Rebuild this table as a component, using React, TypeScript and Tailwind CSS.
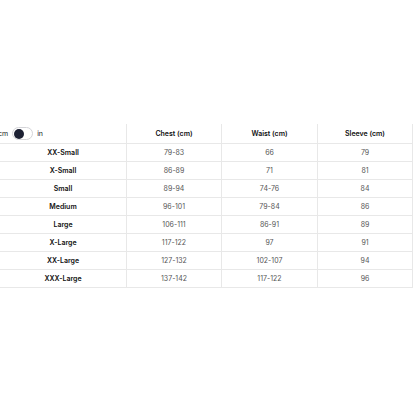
import React from "react";

const rows: [string, string, string, string][] = [
  ["XX-Small", "79-83", "66", "79"],
  ["X-Small", "86-89", "71", "81"],
  ["Small", "89-94", "74-76", "84"],
  ["Medium", "96-101", "79-84", "86"],
  ["Large", "106-111", "86-91", "89"],
  ["X-Large", "117-122", "97", "91"],
  ["XX-Large", "127-132", "102-107", "94"],
  ["XXX-Large", "137-142", "117-122", "96"],
];

export default function App() {
  return (
    <div
      className="w-[416px] h-[416px] bg-white overflow-hidden pt-[124px]"
      style={{ fontFamily: "Inter, 'Liberation Sans', sans-serif" }}
    >
      <div className="grid grid-cols-[127px_95px_96px_95px] text-[7px] leading-none">
        <div className="h-[20px] border-r border-b border-[#e8e8e8] flex items-center -ml-[2px] text-[#222]">
          <span>cm</span>
          <span className="ml-[4px] w-[21px] h-[13px] rounded-full border border-[#d4d4d8] bg-white flex items-center px-[1px]">
            <span className="w-[10px] h-[10px] rounded-full bg-[#1c2033]" />
          </span>
          <span className="ml-[4px]">in</span>
        </div>
        {["Chest (cm)", "Waist (cm)", "Sleeve (cm)"].map((h) => (
          <div
            key={h}
            className="h-[20px] border-r border-b border-[#e8e8e8] flex items-center justify-center font-semibold text-[#111]"
          >
            {h}
          </div>
        ))}
        {rows.map((r) => (
          <React.Fragment key={r[0]}>
            <div className="h-[18px] border-r border-b border-[#e8e8e8] flex items-center justify-center font-semibold text-[#111]">
              {r[0]}
            </div>
            {r.slice(1).map((v, i) => (
              <div
                key={i}
                className="h-[18px] border-r border-b border-[#e8e8e8] flex items-center justify-center text-[#555]"
              >
                {v}
              </div>
            ))}
          </React.Fragment>
        ))}
      </div>
    </div>
  );
}
